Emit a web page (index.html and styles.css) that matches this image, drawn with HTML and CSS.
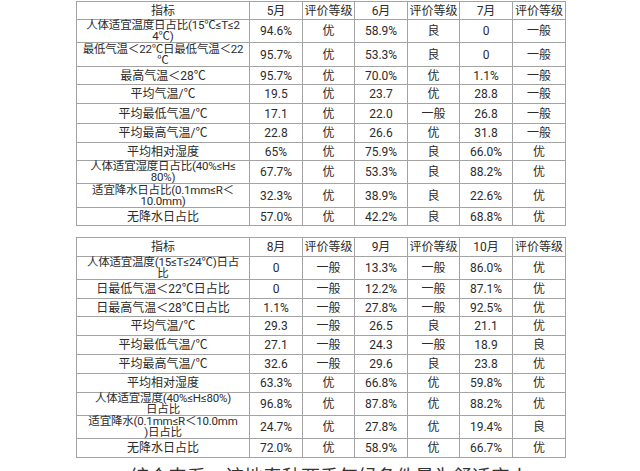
FILE: index.html
```html
<!DOCTYPE html>
<html lang="zh-CN">
<head>
<meta charset="utf-8">
<title>气候舒适度评价</title>
<link rel="stylesheet" href="styles.css">
</head>
<body>
<div class="tbl t1">
  <div class="c">指标</div><div class="c">5月</div><div class="c">评价等级</div><div class="c">6月</div><div class="c">评价等级</div><div class="c">7月</div><div class="c">评价等级</div>
  <div class="c two">人体适宜温度日占比(15℃≤T≤2<br>4℃)</div><div class="c">94.6%</div><div class="c">优</div><div class="c">58.9%</div><div class="c">良</div><div class="c">0</div><div class="c">一般</div>
  <div class="c two">最低气温＜22℃日最低气温＜22<br>℃</div><div class="c">95.7%</div><div class="c">优</div><div class="c">53.3%</div><div class="c">良</div><div class="c">0</div><div class="c">一般</div>
  <div class="c">最高气温＜28℃</div><div class="c">95.7%</div><div class="c">优</div><div class="c">70.0%</div><div class="c">优</div><div class="c">1.1%</div><div class="c">一般</div>
  <div class="c">平均气温/℃</div><div class="c">19.5</div><div class="c">优</div><div class="c">23.7</div><div class="c">优</div><div class="c">28.8</div><div class="c">一般</div>
  <div class="c">平均最低气温/℃</div><div class="c">17.1</div><div class="c">优</div><div class="c">22.0</div><div class="c">一般</div><div class="c">26.8</div><div class="c">一般</div>
  <div class="c">平均最高气温/℃</div><div class="c">22.8</div><div class="c">优</div><div class="c">26.6</div><div class="c">优</div><div class="c">31.8</div><div class="c">一般</div>
  <div class="c">平均相对湿度</div><div class="c">65%</div><div class="c">优</div><div class="c">75.9%</div><div class="c">良</div><div class="c">66.0%</div><div class="c">优</div>
  <div class="c two">人体适宜湿度日占比(40%≤H≤<br>80%)</div><div class="c">67.7%</div><div class="c">优</div><div class="c">53.3%</div><div class="c">良</div><div class="c">88.2%</div><div class="c">优</div>
  <div class="c two">适宜降水日占比(0.1mm≤R＜<br>10.0mm)</div><div class="c">32.3%</div><div class="c">优</div><div class="c">38.9%</div><div class="c">良</div><div class="c">22.6%</div><div class="c">优</div>
  <div class="c">无降水日占比</div><div class="c">57.0%</div><div class="c">优</div><div class="c">42.2%</div><div class="c">良</div><div class="c">68.8%</div><div class="c">优</div>
</div>
<div class="tbl t2">
  <div class="c">指标</div><div class="c">8月</div><div class="c">评价等级</div><div class="c">9月</div><div class="c">评价等级</div><div class="c">10月</div><div class="c">评价等级</div>
  <div class="c two">人体适宜温度(15≤T≤24℃)日占<br>比</div><div class="c">0</div><div class="c">一般</div><div class="c">13.3%</div><div class="c">一般</div><div class="c">86.0%</div><div class="c">优</div>
  <div class="c">日最低气温＜22℃日占比</div><div class="c">0</div><div class="c">一般</div><div class="c">12.2%</div><div class="c">一般</div><div class="c">87.1%</div><div class="c">优</div>
  <div class="c">日最高气温＜28℃日占比</div><div class="c">1.1%</div><div class="c">一般</div><div class="c">27.8%</div><div class="c">一般</div><div class="c">92.5%</div><div class="c">优</div>
  <div class="c">平均气温/℃</div><div class="c">29.3</div><div class="c">一般</div><div class="c">26.5</div><div class="c">良</div><div class="c">21.1</div><div class="c">优</div>
  <div class="c">平均最低气温/℃</div><div class="c">27.1</div><div class="c">一般</div><div class="c">24.3</div><div class="c">一般</div><div class="c">18.9</div><div class="c">良</div>
  <div class="c">平均最高气温/℃</div><div class="c">32.6</div><div class="c">一般</div><div class="c">29.6</div><div class="c">良</div><div class="c">23.8</div><div class="c">优</div>
  <div class="c">平均相对湿度</div><div class="c">63.3%</div><div class="c">优</div><div class="c">66.8%</div><div class="c">优</div><div class="c">59.8%</div><div class="c">优</div>
  <div class="c two">人体适宜湿度(40%≤H≤80%)<br>日占比</div><div class="c">96.8%</div><div class="c">优</div><div class="c">87.8%</div><div class="c">优</div><div class="c">88.2%</div><div class="c">优</div>
  <div class="c two">适宜降水(0.1mm≤R＜10.0mm<br>)日占比</div><div class="c">24.7%</div><div class="c">优</div><div class="c">27.8%</div><div class="c">优</div><div class="c">19.4%</div><div class="c">良</div>
  <div class="c">无降水日占比</div><div class="c">72.0%</div><div class="c">优</div><div class="c">58.9%</div><div class="c">优</div><div class="c">66.7%</div><div class="c">优</div>
</div>
<p class="para">综合来看，该地春秋两季气候条件最为舒适宜人</p>
</body>
</html>
```
FILE: styles.css
```css
html, body {
  margin: 0;
  padding: 0;
  background: #ffffff;
}
body {
  padding: 1px 0 0 76px;
  overflow: hidden;
  height: 470px;
  font-family: "Roboto", "Noto Sans CJK SC", sans-serif;
  color: #2b2b2b;
}
.tbl {
  display: grid;
  grid-template-columns: 172px 52px 51px 52px 51px 52px 52px;
  gap: 1px;
  padding: 1px;
  width: 490px;
  box-sizing: border-box;
  background: #a3a3a3;
}
.t1 {
  grid-template-rows: 17px 22px 23px 17px 18px 19px 18px 17px 22px 23px 17px;
}
.t2 {
  margin-top: 11px;
  grid-template-rows: 18px 22px 18px 17px 18px 18px 18px 18px 22px 22px 18px;
}
.c {
  background: #ffffff;
  display: flex;
  align-items: center;
  justify-content: center;
  text-align: center;
  font-size: 12px;
  line-height: 14px;
  white-space: nowrap;
}
.c.two {
  font-size: 11.5px;
  line-height: 11px;
  letter-spacing: -0.2px;
}
.para {
  margin: 5px 0 0;
  padding-left: 54px;
  font-size: 19px;
  line-height: 26px;
  color: #333333;
  font-family: "Noto Sans CJK SC", sans-serif;
}
```
